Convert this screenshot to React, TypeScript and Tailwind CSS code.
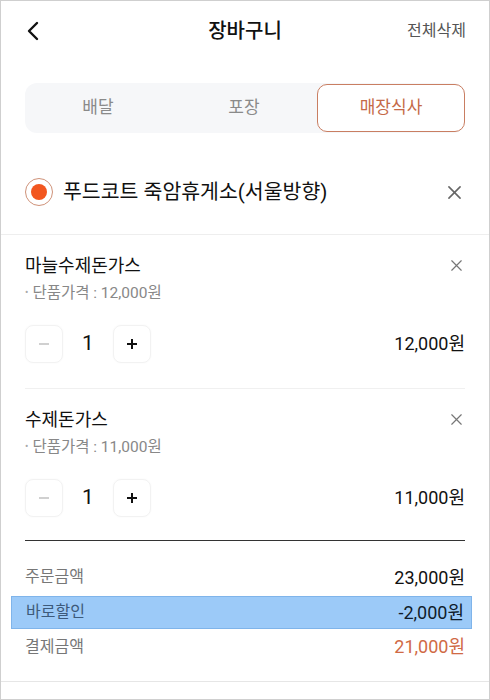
import React from "react";

const font = { fontFamily: "Roboto, 'Noto Sans CJK KR', sans-serif" };

function XIcon({ size = 14, color = "#666", sw = 1.6 }: { size?: number; color?: string; sw?: number }) {
  return (
    <svg width={size} height={size} viewBox="0 0 14 14" fill="none">
      <path d="M1 1L13 13M13 1L1 13" stroke={color} strokeWidth={sw} strokeLinecap="round" />
    </svg>
  );
}

function Item({ name, unit, total, last }: { name: string; unit: string; total: string; last?: boolean }) {
  return (
    <div className={`mx-6 pt-[20px] ${last ? "pb-[23px] border-b border-[#333]" : "pb-[25px] border-b border-[#f0f0f0]"}`}>
      <div className="flex items-center justify-between h-[22px]">
        <span className="text-[18px] text-[#111] leading-[22px]">{name}</span>
        <span className="mr-[3px]">
          <XIcon size={11} color="#777" sw={1.5} />
        </span>
      </div>
      <div className="mt-[6px] h-[20px] flex items-center text-[15.5px] text-[#888] leading-[20px]">
        <span className="text-[10px] mr-[4px] text-[#aaa]">•</span>
        <span>단품가격 : {unit}</span>
      </div>
      <div className="mt-[22px] flex items-center justify-between">
        <div className="flex items-center">
          <div className="w-[38px] h-[38px] rounded-[8px] border border-[#f2f2f2] shadow-[0_0_2px_rgba(0,0,0,0.04)] flex items-center justify-center">
            <div className="w-[10px] h-[1.5px] bg-[#d0d0d0]" />
          </div>
          <div className="w-[50px] text-center text-[21px] text-[#111] leading-none">1</div>
          <div className="w-[38px] h-[38px] rounded-[8px] border border-[#f2f2f2] shadow-[0_0_2px_rgba(0,0,0,0.04)] flex items-center justify-center">
            <svg width="12" height="12" viewBox="0 0 12 12">
              <path d="M6 1V11M1 6H11" stroke="#111" strokeWidth="2" />
            </svg>
          </div>
        </div>
        <span className="text-[18px] text-[#111]">{total}</span>
      </div>
    </div>
  );
}

export default function App() {
  return (
    <div style={font} className="w-[490px] h-[700px] bg-white border border-[#cfcfcf] overflow-hidden">
      {/* Header */}
      <div className="h-[60px] px-6 grid grid-cols-[1fr_auto_1fr] items-center">
        <div className="flex items-center">
          <svg width="14" height="20" viewBox="0 0 14 20" fill="none" className="ml-[1px]">
            <path d="M11 2L3 10L11 18" stroke="#111" strokeWidth="2.4" strokeLinecap="round" strokeLinejoin="round" />
          </svg>
        </div>
        <div className="text-[20px] text-[#111] font-medium">장바구니</div>
        <div className="text-right text-[16px] text-[#555] -mr-[1px]">전체삭제</div>
      </div>

      {/* Tabs */}
      <div className="mx-6 mt-[22px] h-[50px] bg-[#f6f7f9] rounded-[12px] flex">
        <div className="flex-1 flex items-center justify-center text-[17px] text-[#8a8a8a]">배달</div>
        <div className="flex-1 flex items-center justify-center text-[17px] text-[#8a8a8a]">포장</div>
        <div className="flex-1 my-[1px] rounded-[10px] bg-white border-[1.5px] border-[#c97e62] flex items-center justify-center text-[17px] text-[#c56a48]">
          매장식사
        </div>
      </div>

      {/* Store */}
      <div className="px-6 pt-[44px] pb-[26px] flex items-center justify-between border-b border-[#eeeeee]">
        <div className="flex items-center">
          <div className="w-[28px] h-[28px] rounded-full border-[1.5px] border-[#cf9279] flex items-center justify-center">
            <div className="w-[16px] h-[16px] rounded-full bg-[#f2561f]" />
          </div>
          <span className="ml-[10px] text-[20.5px] text-[#111]">푸드코트 죽암휴게소(서울방향)</span>
        </div>
        <span className="mr-[4px]">
          <XIcon size={13} color="#666" sw={1.7} />
        </span>
      </div>

      <Item name="마늘수제돈가스" unit="12,000원" total="12,000원" />
      <Item name="수제돈가스" unit="11,000원" total="11,000원" last />

      {/* Summary */}
      <div className="mx-6 mt-[19px]">
        <div className="h-[35px] flex items-center justify-between">
          <span className="text-[16px] text-[#777]">주문금액</span>
          <span className="text-[18px] text-[#111]">23,000원</span>
        </div>
        <div className="h-[35px] -ml-[14px] -mr-[7px] flex items-center">
          <div className="w-full h-[33px] pl-[14px] pr-[7px] bg-[#9ccaf8] border border-[#7fb4ea] flex items-center justify-between">
            <span className="text-[16px] text-[#3d5a7a]">바로할인</span>
            <span className="text-[18px] text-[#0f1c2b]">-2,000원</span>
          </div>
        </div>
        <div className="h-[34px] flex items-center justify-between">
          <span className="text-[16px] text-[#777]">결제금액</span>
          <span className="text-[18px] text-[#d06a45]">21,000원</span>
        </div>
      </div>
      <div className="mt-[17px] border-b border-[#e6e6e6]" />
    </div>
  );
}
